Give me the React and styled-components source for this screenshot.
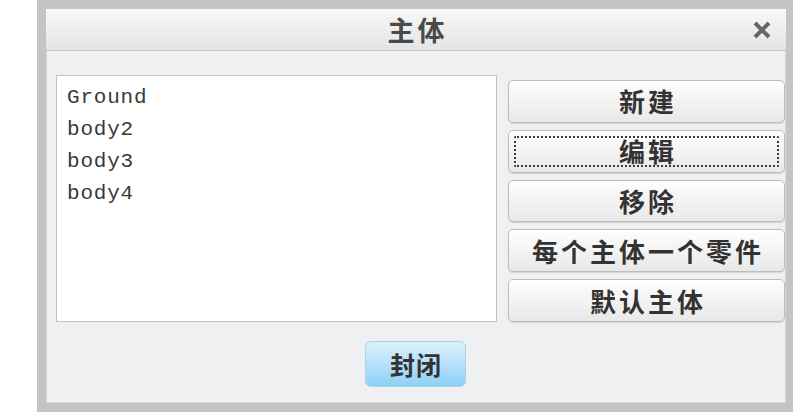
import React from "react";
import styled, { createGlobalStyle } from "styled-components";

const GlobalStyle = createGlobalStyle`
  html, body { margin: 0; padding: 0; background: #ffffff; }
  body { font-family: "Noto Sans CJK SC", "Noto Sans", sans-serif; }
  * { box-sizing: border-box; }
`;

const Page = styled.div`
  width: 796px;
  height: 412px;
  padding-left: 37px;
  display: flex;
`;

const Dialog = styled.div`
  width: 756px;
  height: 412px;
  border-style: solid;
  border-color: #c4c4c4;
  border-width: 9px 7px 9px 9px;
  box-shadow: inset 0 0 0 1px #d8d8d8;
  background: #eff0f1;
  display: flex;
  flex-direction: column;
`;

const TitleBar = styled.div`
  position: relative;
  height: 42px;
  flex: 0 0 42px;
  display: flex;
  align-items: center;
  justify-content: center;
  background: linear-gradient(#f8f8f8, #e3e4e5);
  border-bottom: 1px solid #c6c6c6;
`;

const Title = styled.span`
  font-family: "Noto Sans CJK SC", sans-serif;
  font-weight: 700;
  font-size: 27px;
  letter-spacing: 3px;
  padding-left: 3px;
  color: #4a4a4a;
  line-height: 1;
`;

const CloseX = styled.span`
  position: absolute;
  right: 14px;
  top: 12px;
  width: 20px;
  height: 18px;
  display: flex;
`;

const Body = styled.div`
  flex: 1;
  display: grid;
  grid-template-columns: 441px 277px;
  grid-template-rows: 247px auto;
  column-gap: 11px;
  row-gap: 19px;
  padding: 24px 0 0 10px;
`;

const List = styled.div`
  background: #ffffff;
  border: 1px solid #c2c2c2;
  padding: 6px 0 0 10px;
  display: flex;
  flex-direction: column;
`;

const Item = styled.div`
  font-family: "Liberation Mono", "DejaVu Sans Mono", monospace;
  font-size: 21px;
  letter-spacing: 0.8px;
  line-height: 32px;
  color: #3a3a3a;
`;

const ButtonColumn = styled.div`
  display: flex;
  flex-direction: column;
  gap: 7px;
  padding-top: 5px;
`;

const Button = styled.button`
  position: relative;
  height: 43px;
  width: 100%;
  border: 1px solid #bcbcbc;
  border-radius: 5px;
  background: linear-gradient(#fefefe, #e8e8e8);
  box-shadow: 0 1px 1px rgba(0, 0, 0, 0.12);
  font-family: "Noto Sans CJK SC", sans-serif;
  font-weight: 700;
  font-size: 26px;
  letter-spacing: 3px;
  padding: 0 0 0 3px;
  color: #333333;
  line-height: 1;
  display: flex;
  align-items: center;
  justify-content: center;
  &::after {
    content: "";
    display: ${(p) => (p.$focused ? "block" : "none")};
    position: absolute;
    inset: 5px 5px 5px 5px;
    border: 2px dotted #3a3a3a;
    border-radius: 2px;
  }
`;

const Footer = styled.div`
  grid-column: 1 / -1;
  display: flex;
  justify-content: center;
  padding-right: 10px;
`;

const CloseButton = styled.button`
  width: 101px;
  height: 46px;
  border: 1px solid #a9d2ec;
  border-radius: 6px;
  background: linear-gradient(#dcf1fc, #8fd0f6);
  font-family: "Noto Sans CJK SC", sans-serif;
  font-weight: 700;
  font-size: 25px;
  letter-spacing: 1px;
  padding: 0 0 0 1px;
  color: #333333;
  line-height: 1;
  display: flex;
  align-items: center;
  justify-content: center;
`;

const items = ["Ground", "body2", "body3", "body4"];
const buttons = ["新建", "编辑", "移除", "每个主体一个零件", "默认主体"];

export default function App() {
  return (
    <>
      <GlobalStyle />
      <Page>
        <Dialog>
          <TitleBar>
            <Title>主体</Title>
            <CloseX>
              <svg width="20" height="18" viewBox="0 0 20 18">
                <path d="M3 2 L17 16 M17 2 L3 16" stroke="#666" strokeWidth="4" strokeLinecap="butt" />
              </svg>
            </CloseX>
          </TitleBar>
          <Body>
            <List>
              {items.map((t) => (
                <Item key={t}>{t}</Item>
              ))}
            </List>
            <ButtonColumn>
              {buttons.map((b, i) => (
                <Button key={b} $focused={i === 1}>
                  {b}
                </Button>
              ))}
            </ButtonColumn>
            <Footer>
              <CloseButton>封闭</CloseButton>
            </Footer>
          </Body>
        </Dialog>
      </Page>
    </>
  );
}
